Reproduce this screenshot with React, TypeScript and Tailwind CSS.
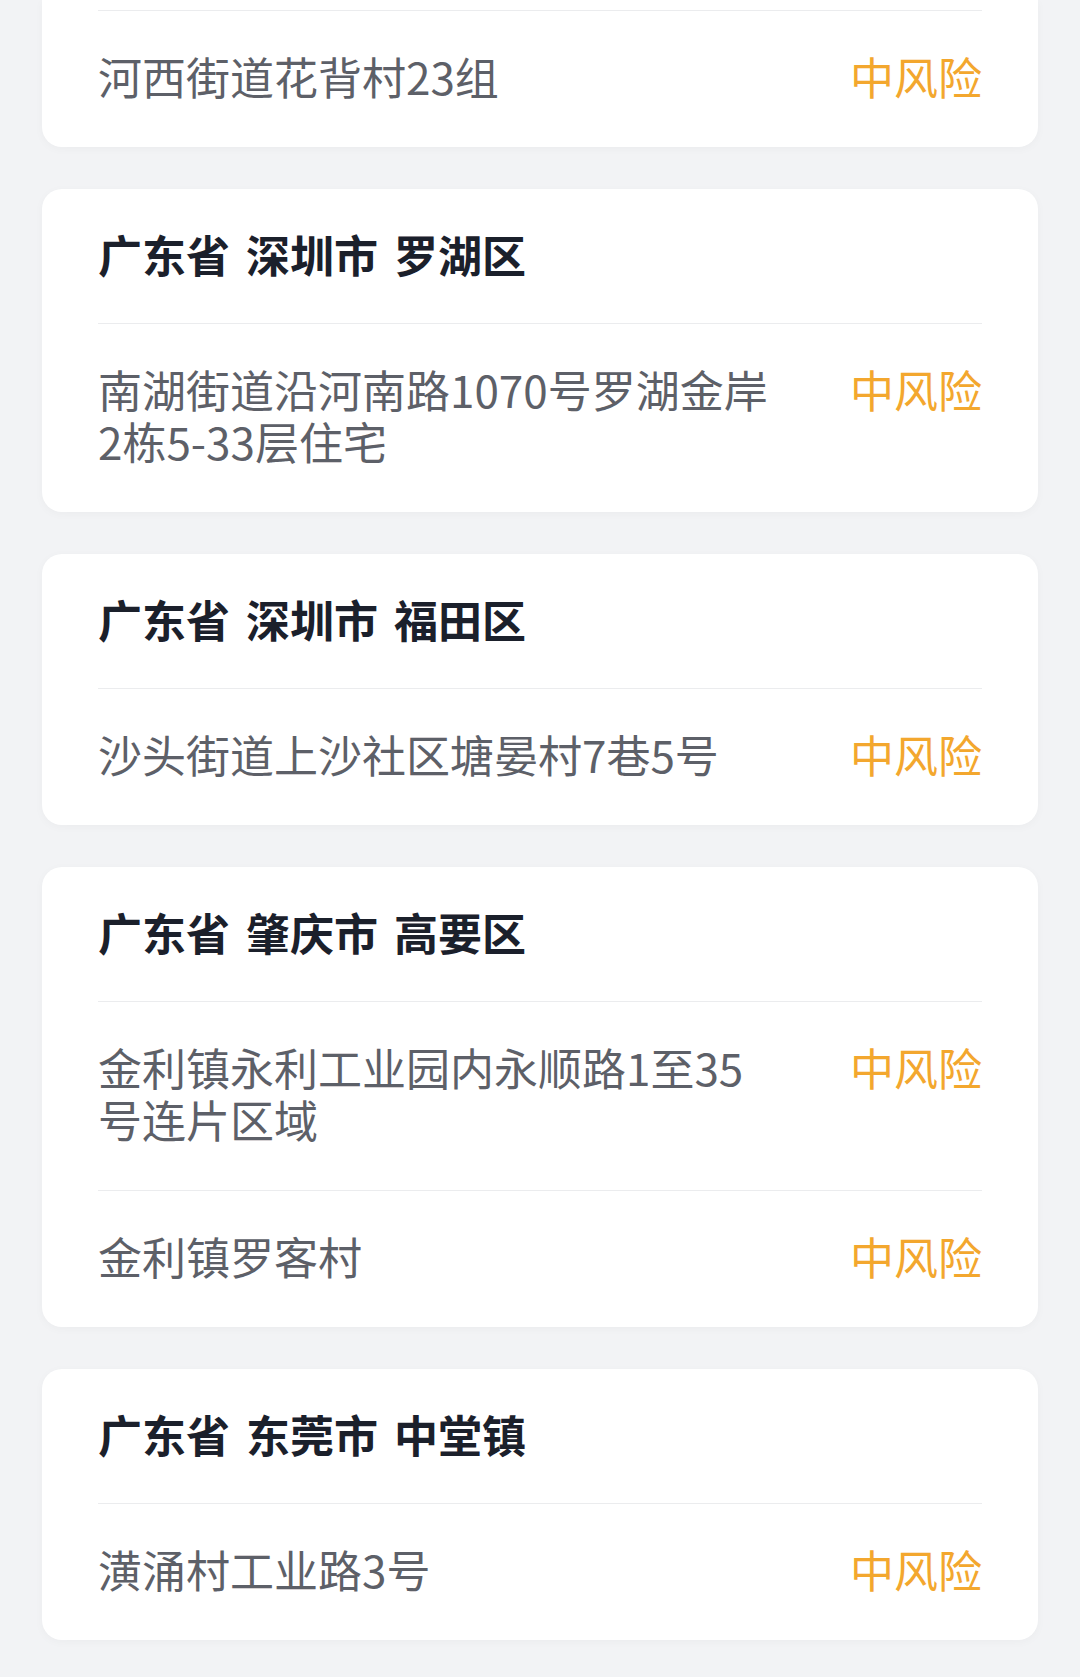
type Row = { addr: string; level: string };
type Area = { title?: string; rows: Row[] };

const areas: Area[] = [
  { rows: [{ addr: "河西街道花背村23组", level: "中风险" }] },
  {
    title: "广东省 深圳市 罗湖区",
    rows: [{ addr: "南湖街道沿河南路1070号罗湖金岸2栋5-33层住宅", level: "中风险" }],
  },
  {
    title: "广东省 深圳市 福田区",
    rows: [{ addr: "沙头街道上沙社区塘晏村7巷5号", level: "中风险" }],
  },
  {
    title: "广东省 肇庆市 高要区",
    rows: [
      { addr: "金利镇永利工业园内永顺路1至35号连片区域", level: "中风险" },
      { addr: "金利镇罗客村", level: "中风险" },
    ],
  },
  {
    title: "广东省 东莞市 中堂镇",
    rows: [{ addr: "潢涌村工业路3号", level: "中风险" }],
  },
];

const AreaCard = ({ area, first }: { area: Area; first: boolean }) => {
  return (
    <div
      className={
        first
          ? "bg-white rounded-b-[20px] px-[56px] pt-[10px] shadow-[0_2px_10px_rgba(0,0,0,0.03)]"
          : "bg-white rounded-[20px] px-[56px] shadow-[0_2px_10px_rgba(0,0,0,0.03)]"
      }
    >
      {area.title && (
        <div className="pt-[39px] pb-[43px] text-[44px] leading-[52px] font-bold text-[#1b202b] [word-spacing:6px]">
          {area.title}
        </div>
      )}
      {area.rows.map((row, i) => (
        <div
          key={i}
          className="flex items-start justify-between border-t border-[#ebecee] pt-[39px] pb-[45px]"
        >
          <div className="w-[679px] text-[44px] leading-[52px] text-[#5d6068]">{row.addr}</div>
          <div className="shrink-0 text-[44px] leading-[52px] text-[#f3a72e]">{row.level}</div>
        </div>
      ))}
    </div>
  );
};

const App = () => {
  return (
    <div
      className="min-h-[1677px] bg-[#f2f3f5] px-[42px] pb-[40px]"
      style={{ fontFamily: '"Noto Sans CJK SC", "Noto Sans", sans-serif' }}
    >
      <div className="flex flex-col gap-[42px]">
        {areas.map((area, i) => (
          <AreaCard key={i} area={area} first={i === 0} />
        ))}
      </div>
    </div>
  );
};

export default App;
